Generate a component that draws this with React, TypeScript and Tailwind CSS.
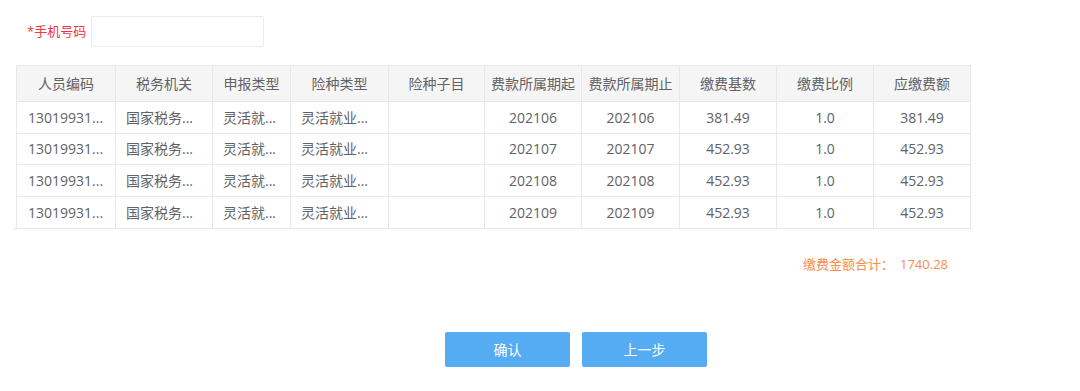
const HEADERS = [
  { label: '人员编码', w: 'w-[99px]' },
  { label: '税务机关', w: 'w-[97px]' },
  { label: '申报类型', w: 'w-[78px]' },
  { label: '险种类型', w: 'w-[98px]' },
  { label: '险种子目', w: 'w-[96px]' },
  { label: '费款所属期起', w: 'w-[97px]' },
  { label: '费款所属期止', w: 'w-[98px]' },
  { label: '缴费基数', w: 'w-[97px]' },
  { label: '缴费比例', w: 'w-[97px]' },
  { label: '应缴费额', w: 'w-[97px]' },
];

const ROWS = [
  { start: '202106', end: '202106', base: '381.49', amount: '381.49' },
  { start: '202107', end: '202107', base: '452.93', amount: '452.93' },
  { start: '202108', end: '202108', base: '452.93', amount: '452.93' },
  { start: '202109', end: '202109', base: '452.93', amount: '452.93' },
];

const cell = 'border border-[#e8e8e8] h-[31.5px] text-[14px] text-[#606266] whitespace-nowrap';

export default function App() {
  return (
    <div className="w-[1080px] h-[391px] bg-white font-['Open_Sans','Noto_Sans_CJK_SC',sans-serif]">
      <div className="flex items-center pt-[16px] pl-[27px]">
        <label className="text-[13px] text-[#f5333f] mr-[5px]">*手机号码</label>
        <input className="w-[173px] h-[31px] border border-[#ebebeb] rounded-[2px] outline-none px-2 text-sm" />
      </div>

      <div className="mt-[18px] ml-[13px] w-[958px] border-b border-[#e8e8e8]">
        <table className="ml-[3px] border-collapse table-fixed">
          <thead>
            <tr className="bg-[#f5f5f5]">
              {HEADERS.map((h) => (
                <th
                  key={h.label}
                  className={`${h.w} border border-[#e8e8e8] h-[36px] text-[14px] font-normal text-[#606266] text-center whitespace-nowrap`}
                >
                  {h.label}
                </th>
              ))}
            </tr>
          </thead>
          <tbody>
            {ROWS.map((r, i) => {
              const c = i === ROWS.length - 1 ? `${cell} border-b-0` : cell;
              return (
                <tr key={r.start}>
                  <td className={`${c} pl-[11px]`}>13019931...</td>
                  <td className={`${c} pl-[10px]`}>国家税务...</td>
                  <td className={`${c} pl-[10px]`}>灵活就...</td>
                  <td className={`${c} pl-[10px]`}>灵活就业...</td>
                  <td className={c}></td>
                  <td className={`${c} text-center`}>{r.start}</td>
                  <td className={`${c} text-center`}>{r.end}</td>
                  <td className={`${c} text-center`}>{r.base}</td>
                  <td className={`${c} text-center`}>1.0</td>
                  <td className={`${c} text-center`}>{r.amount}</td>
                </tr>
              );
            })}
          </tbody>
        </table>
      </div>

      <div className="flex justify-end w-[948px] mt-[26px] text-[13px] text-[#fa8c4b]">
        <span>缴费金额合计：</span>
        <span className="ml-[6px]">1740.28</span>
      </div>

      <div className="flex gap-[12px] mt-[58px] ml-[445px]">
        <button className="w-[125px] h-[35px] rounded-[2px] bg-[#55acf3] text-white text-[14px]">确认</button>
        <button className="w-[125px] h-[35px] rounded-[2px] bg-[#55acf3] text-white text-[14px]">上一步</button>
      </div>
    </div>
  );
}
